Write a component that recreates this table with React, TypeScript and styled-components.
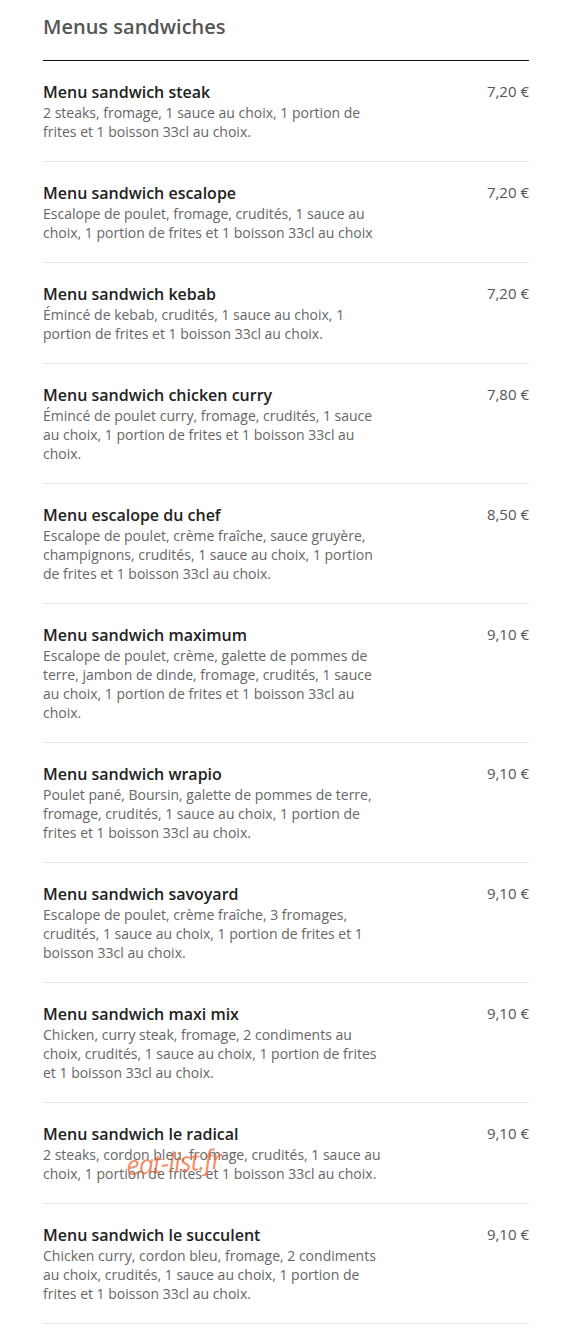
import React from 'react'
import styled, { createGlobalStyle } from 'styled-components'

const GlobalStyle = createGlobalStyle`
  body {
    margin: 0;
    background: #fff;
    font-family: "Open Sans", "Liberation Sans", sans-serif;
  }
`

const Page = styled.div`
  padding: 13px 57px 0 43px;
  position: relative;
`

const Title = styled.h2`
  margin: 0;
  font-size: 20px;
  line-height: 28px;
  font-weight: 600;
  color: #555;
  padding-bottom: 19px;
  border-bottom: 1px solid #111;
`

const List = styled.div`
  display: flex;
  flex-direction: column;
`

const Item = styled.div`
  display: flex;
  justify-content: space-between;
  align-items: flex-start;
  padding: 20px 0;
  border-bottom: 1px solid #e6e6e6;
`

const Info = styled.div`
  display: flex;
  flex-direction: column;
`

const Name = styled.div`
  font-size: 16px;
  line-height: 22px;
  font-weight: 600;
  color: #222;
`

const Desc = styled.div`
  font-size: 14px;
  line-height: 19px;
  color: #666;
  max-width: 342px;
`

const Price = styled.div`
  font-size: 15px;
  line-height: 20px;
  color: #555;
  white-space: nowrap;
`

// site watermark stamped over the list
const Watermark = styled.div`
  position: absolute;
  left: 126px;
  top: 1146px;
  font-size: 27px;
  line-height: 32px;
  font-style: italic;
  color: rgba(238, 105, 55, 0.75);
  transform: rotate(-4deg);
  letter-spacing: -1px;
  pointer-events: none;
`

const items = [
  { name: 'Menu sandwich steak', price: '7,20 €', desc: '2 steaks, fromage, 1 sauce au choix, 1 portion de frites et 1 boisson 33cl au choix.' },
  { name: 'Menu sandwich escalope', price: '7,20 €', desc: 'Escalope de poulet, fromage, crudités, 1 sauce au choix, 1 portion de frites et 1 boisson 33cl au choix' },
  { name: 'Menu sandwich kebab', price: '7,20 €', desc: 'Émincé de kebab, crudités, 1 sauce au choix, 1 portion de frites et 1 boisson 33cl au choix.' },
  { name: 'Menu sandwich chicken curry', price: '7,80 €', desc: 'Émincé de poulet curry, fromage, crudités, 1 sauce au choix, 1 portion de frites et 1 boisson 33cl au choix.' },
  { name: 'Menu escalope du chef', price: '8,50 €', desc: 'Escalope de poulet, crème fraîche, sauce gruyère, champignons, crudités, 1 sauce au choix, 1 portion de frites et 1 boisson 33cl au choix.' },
  { name: 'Menu sandwich maximum', price: '9,10 €', desc: 'Escalope de poulet, crème, galette de pommes de terre, jambon de dinde, fromage, crudités, 1 sauce au choix, 1 portion de frites et 1 boisson 33cl au choix.' },
  { name: 'Menu sandwich wrapio', price: '9,10 €', desc: 'Poulet pané, Boursin, galette de pommes de terre, fromage, crudités, 1 sauce au choix, 1 portion de frites et 1 boisson 33cl au choix.' },
  { name: 'Menu sandwich savoyard', price: '9,10 €', desc: 'Escalope de poulet, crème fraîche, 3 fromages, crudités, 1 sauce au choix, 1 portion de frites et 1 boisson 33cl au choix.' },
  { name: 'Menu sandwich maxi mix', price: '9,10 €', desc: 'Chicken, curry steak, fromage, 2 condiments au choix, crudités, 1 sauce au choix, 1 portion de frites et 1 boisson 33cl au choix.' },
  { name: 'Menu sandwich le radical', price: '9,10 €', desc: '2 steaks, cordon bleu, fromage, crudités, 1 sauce au choix, 1 portion de frites et 1 boisson 33cl au choix.' },
  { name: 'Menu sandwich le succulent', price: '9,10 €', desc: 'Chicken curry, cordon bleu, fromage, 2 condiments au choix, crudités, 1 sauce au choix, 1 portion de frites et 1 boisson 33cl au choix.' },
]

const App: React.FC = () => {
  return (
    <>
      <GlobalStyle />
      <Page>
        <Title>Menus sandwiches</Title>
        <List>
          {items.map(item => (
            <Item key={item.name}>
              <Info>
                <Name>{item.name}</Name>
                <Desc>{item.desc}</Desc>
              </Info>
              <Price>{item.price}</Price>
            </Item>
          ))}
        </List>
        <Watermark>eat-list.fr</Watermark>
      </Page>
    </>
  )
}

export default App
